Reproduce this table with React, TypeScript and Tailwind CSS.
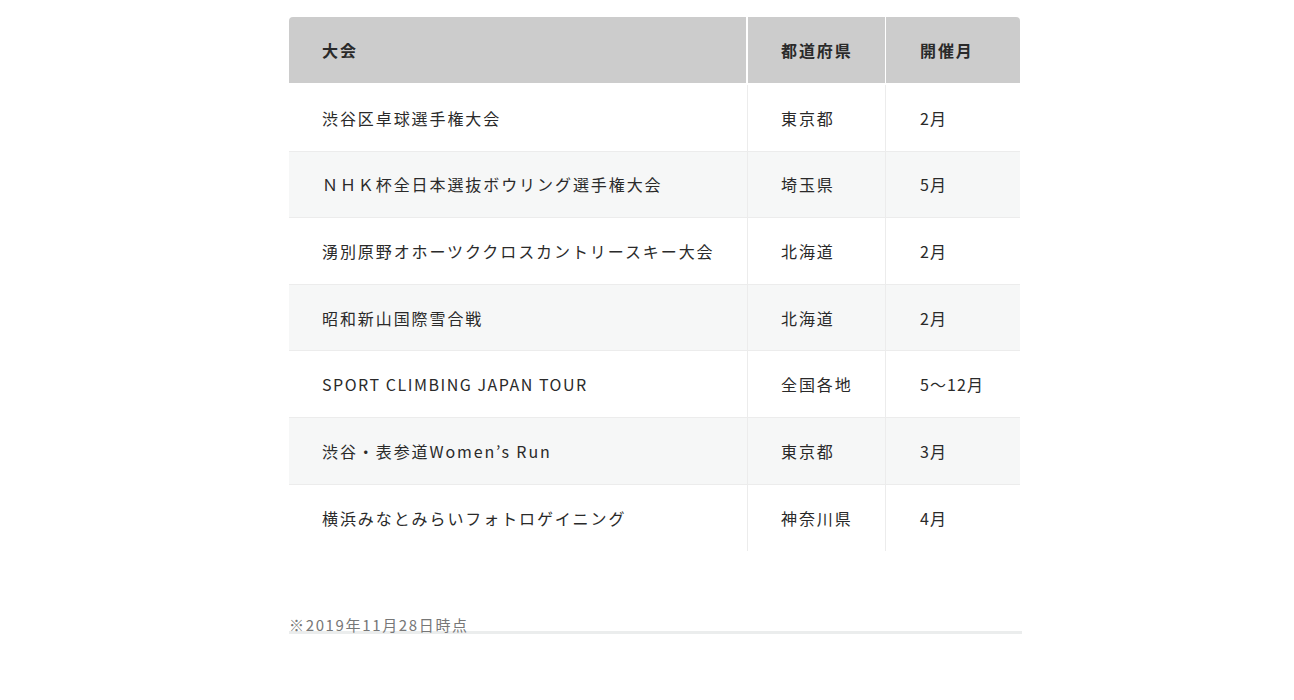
import React from "react";

const rows: [string, string, string][] = [
  ["渋谷区卓球選手権大会", "東京都", "2月"],
  ["ＮＨＫ杯全日本選抜ボウリング選手権大会", "埼玉県", "5月"],
  ["湧別原野オホーツククロスカントリースキー大会", "北海道", "2月"],
  ["昭和新山国際雪合戦", "北海道", "2月"],
  ["SPORT CLIMBING JAPAN TOUR", "全国各地", "5～12月"],
  ["渋谷・表参道Women’s Run", "東京都", "3月"],
  ["横浜みなとみらいフォトロゲイニング", "神奈川県", "4月"],
];

export default function App() {
  return (
    <div
      className="w-full min-h-[700px] bg-white text-[#2a2a2a]"
      style={{ fontFamily: '"Noto Sans CJK JP", "Noto Sans", sans-serif' }}
    >
      <div className="w-[733px] ml-[289px] pt-[17px]">
        <div className="w-[731px]">
          <div className="grid grid-cols-[459px_138px_134px] h-[68px] border-b-2 border-white">
            <div className="bg-[#cccccc] rounded-tl-[4px] border-r-2 border-white flex items-center pl-[33px] text-[16px] font-bold tracking-[0.12em]">
              大会
            </div>
            <div className="bg-[#cccccc] border-r border-white flex items-center pl-[33px] text-[16px] font-bold tracking-[0.12em]">
              都道府県
            </div>
            <div className="bg-[#cccccc] rounded-tr-[4px] flex items-center pl-[34px] text-[16px] font-bold tracking-[0.12em]">
              開催月
            </div>
          </div>
          {rows.map((r, i) => (
            <div
              key={i}
              className={`grid grid-cols-[459px_138px_134px] h-[66.6px] ${
                i < rows.length - 1 ? "border-b border-[#ececec]" : ""
              } ${i % 2 === 1 ? "bg-[#f6f7f7]" : "bg-white"}`}
            >
              <div
                className={`border-r border-[#ececec] flex items-center pl-[33px] text-[16px] whitespace-nowrap ${
                  i === 4 ? "tracking-[0.095em]" : "tracking-[0.12em]"
                }`}
              >
                {r[0]}
              </div>
              <div className="border-r border-[#ececec] flex items-center pl-[33px] text-[16px] tracking-[0.12em]">
                {r[1]}
              </div>
              <div className="flex items-center pl-[34px] text-[16px] tracking-[0.07em]">
                {r[2]}
              </div>
            </div>
          ))}
        </div>
        <div className="mt-[68px] text-[15px] leading-[12px] tracking-[0.11em] text-[#777777]">
          ※2019年11月28日時点
        </div>
        <div className="h-[3px] bg-[#ebeded] w-[733px]" />
      </div>
    </div>
  );
}
